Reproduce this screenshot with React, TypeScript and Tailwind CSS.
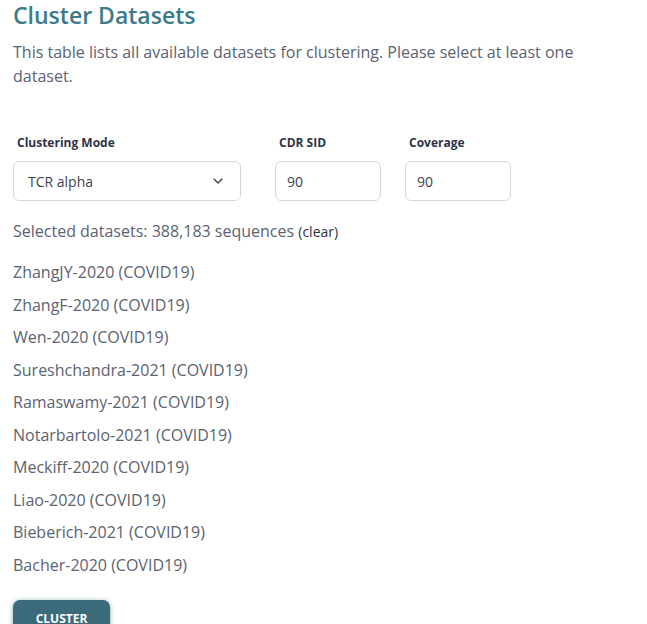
import { ChevronDown } from 'lucide-react';

const DATASETS = [
  'ZhangJY-2020',
  'ZhangF-2020',
  'Wen-2020',
  'Sureshchandra-2021',
  'Ramaswamy-2021',
  'Notarbartolo-2021',
  'Meckiff-2020',
  'Liao-2020',
  'Bieberich-2021',
  'Bacher-2020',
];

export default function App() {
  return (
    <div className="min-h-screen bg-white px-[13px] font-['Open_Sans',sans-serif]">
      <h1 className="text-[23px] font-semibold leading-[30px] text-[#3b7b8b]">Cluster Datasets</h1>
      <p className="mt-[10px] text-[16px] leading-[24px] text-[#5b6371]">
        This table lists all available datasets for clustering. Please select at least one dataset.
      </p>

      {/* Parameters */}
      <div className="mt-[46px] flex items-start gap-[34px]">
        <div className="flex flex-col">
          <label className="mb-[9px] px-[4px] text-[12px] font-bold leading-[18px] text-[#2d3545]">Clustering Mode</label>
          <div className="flex h-[40px] w-[228px] items-center justify-between rounded-[6px] border border-[#d5d8dc] px-[14px] text-[14px] text-[#3c4350]">
            <span>TCR alpha</span>
            <ChevronDown className="h-4 w-4 text-[#3c4350]" strokeWidth={2} />
          </div>
        </div>
        <div className="flex flex-col">
          <label className="mb-[9px] px-[4px] text-[12px] font-bold leading-[18px] text-[#2d3545]">CDR SID</label>
          <div className="flex h-[40px] w-[106px] items-center rounded-[6px] border border-[#d5d8dc] px-[11px] text-[14px] text-[#3c4350]">
            90
          </div>
        </div>
        <div className="-ml-[10px] flex flex-col">
          <label className="mb-[9px] px-[4px] text-[12px] font-bold leading-[18px] text-[#2d3545]">Coverage</label>
          <div className="flex h-[40px] w-[106px] items-center rounded-[6px] border border-[#d5d8dc] px-[11px] text-[14px] text-[#3c4350]">
            90
          </div>
        </div>
      </div>

      <p className="mt-[18px] text-[16px] leading-[24px] text-[#5b6371]">
        Selected datasets: 388,183 sequences{' '}
        <span className="cursor-pointer text-[14px] text-[#2d3545]">(clear)</span>
      </p>

      {/* Dataset list */}
      <ul className="mt-[12px] flex flex-col">
        {DATASETS.map((name) => (
          <li key={name} className="text-[16px] leading-[32.5px] text-[#5b6371]">
            {name} (COVID19)
          </li>
        ))}
      </ul>

      <button className="mt-[19px] h-[37px] w-[97px] rounded-[7px] bg-[#3b6a7a] text-[12px] font-bold text-white shadow-[0_1px_5px_rgba(59,106,122,0.6)]">
        CLUSTER
      </button>
    </div>
  );
}
